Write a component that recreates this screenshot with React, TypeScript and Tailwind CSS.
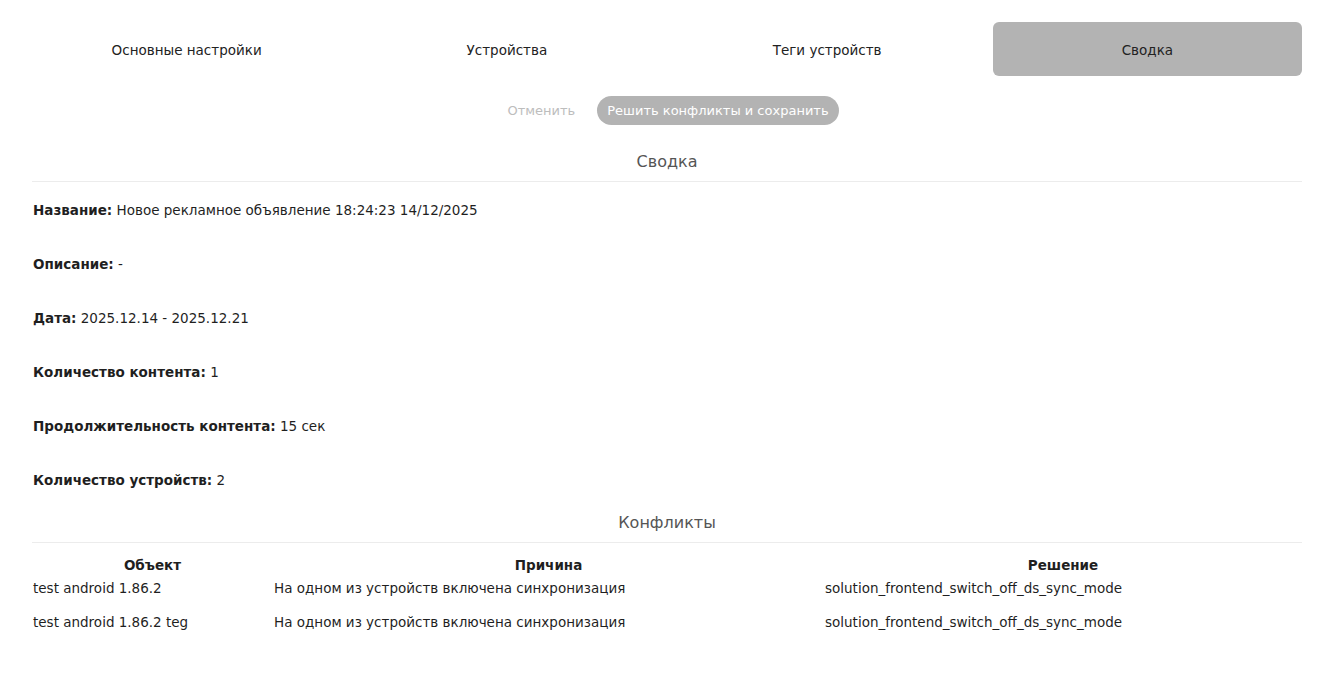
import React from 'react';

const tabs = ['Основные настройки', 'Устройства', 'Теги устройств', 'Сводка'];

const summary: { label: string; value: string }[] = [
    { label: 'Название:', value: 'Новое рекламное объявление 18:24:23 14/12/2025' },
    { label: 'Описание:', value: '-' },
    { label: 'Дата:', value: '2025.12.14 - 2025.12.21' },
    { label: 'Количество контента:', value: '1' },
    { label: 'Продолжительность контента:', value: '15 сек' },
    { label: 'Количество устройств:', value: '2' },
];

const conflicts = [
    {
        object: 'test android 1.86.2',
        reason: 'На одном из устройств включена синхронизация',
        solution: 'solution_frontend_switch_off_ds_sync_mode',
    },
    {
        object: 'test android 1.86.2 teg',
        reason: 'На одном из устройств включена синхронизация',
        solution: 'solution_frontend_switch_off_ds_sync_mode',
    },
];

const SectionTitle: React.FC<{ children: React.ReactNode; className?: string }> = ({ children, className }) => (
    <div className={`text-center text-[16px] leading-6 text-[#555] pb-[7px] border-b border-[#ececec] ${className ?? ''}`}>
        {children}
    </div>
);

const App: React.FC = () => {
    const active = 3;

    return (
        <div className="min-h-screen bg-white px-8 pt-[22px] text-[13.5px] text-[#1f1f1f]" style={{ fontFamily: '"DejaVu Sans", sans-serif' }}>
            <div className="grid grid-cols-4 gap-[11px]">
                {tabs.map((tab, i) => (
                    <button
                        key={tab}
                        className={`h-[54px] pt-[2px] rounded-md text-[13.5px] text-[#222] ${i === active ? 'bg-[#b3b3b3]' : 'bg-transparent'}`}
                    >
                        {tab}
                    </button>
                ))}
            </div>

            <div className="flex justify-center gap-[10px] mt-5">
                <button className="px-3 h-[29px] text-[13px] text-[#bdbdbd]">Отменить</button>
                <button className="px-[10px] h-[29px] rounded-full bg-[#b3b3b3] text-[13px] text-white">Решить конфликты и сохранить</button>
            </div>

            <SectionTitle className="mt-[25px]">Сводка</SectionTitle>

            <div className="pl-px">
                {summary.map((item) => (
                    <div key={item.label} className="pt-[18px] pb-4 leading-5">
                        <span className="font-bold">{item.label}</span> {item.value}
                    </div>
                ))}
            </div>

            <SectionTitle className="mt-[5px]">Конфликты</SectionTitle>

            <table className="w-full table-fixed border-collapse">
                <thead>
                    <tr>
                        <th className="w-[241px] pt-[12px] pb-[3px] leading-5 font-bold text-center">Объект</th>
                        <th className="w-[551px] pt-[12px] pb-[3px] leading-5 font-bold text-center">Причина</th>
                        <th className="pt-[12px] pb-[3px] leading-5 font-bold text-center">Решение</th>
                    </tr>
                </thead>
                <tbody>
                    {conflicts.map((c) => (
                        <tr key={c.object}>
                            <td className="pl-px pb-[14px] leading-5 text-left">{c.object}</td>
                            <td className="pl-px pb-[14px] leading-5 text-left">{c.reason}</td>
                            <td className="pl-px pb-[14px] leading-5 text-left">{c.solution}</td>
                        </tr>
                    ))}
                </tbody>
            </table>
        </div>
    );
};

export default App;
